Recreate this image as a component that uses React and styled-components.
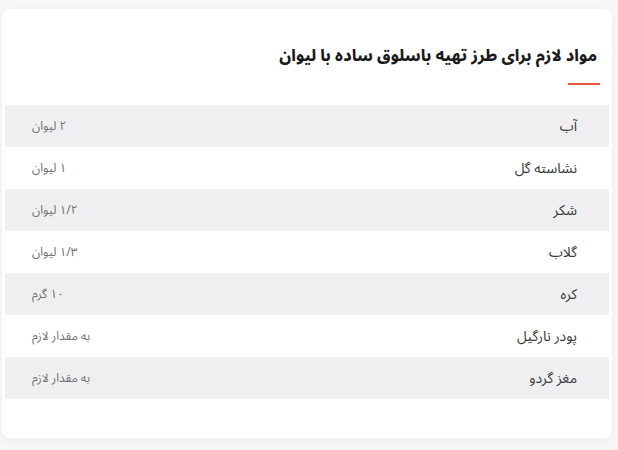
import styled, { createGlobalStyle } from "styled-components";

const GlobalStyle = createGlobalStyle`
  body {
    margin: 0;
    background-color: #f7f7f7;
    font-family: "Noto Sans Arabic", "Noto Sans", "DejaVu Sans", sans-serif;
  }
`;

const Page = styled.div`
  padding: 9px 6px 12px 2px;
`;

const Card = styled.section`
  direction: rtl;
  background-color: #fff;
  border-radius: 8px;
  padding: 0 3px 39px;
  box-shadow: 0 2px 10px rgba(0, 0, 0, 0.05);
`;

const Header = styled.div`
  padding: 33px 12px 20px;
`;

const Title = styled.h2`
  margin: 0;
  font-size: 16px;
  line-height: 28px;
  font-weight: 800;
  color: #1a1a1a;
`;

const Underline = styled.div`
  width: 32px;
  height: 2px;
  margin-top: 13px;
  margin-right: -3px;
  background-color: #e2553d;
`;

const Row = styled.div`
  display: flex;
  align-items: center;
  justify-content: space-between;
  height: 42px;
  padding: 0 32px 0 27px;
  background-color: ${(p) => (p.$striped ? "#efeff1" : "#fff")};
`;

const Name = styled.span`
  font-size: 14px;
  color: #3a3a3a;
`;

const Amount = styled.span`
  font-size: 12px;
  color: #707070;
`;

const ingredients = [
  ["آب", "۲ لیوان"],
  ["نشاسته گل", "۱ لیوان"],
  ["شکر", "۱/۲ لیوان"],
  ["گلاب", "۱/۳ لیوان"],
  ["کره", "۱۰ گرم"],
  ["پودر نارگیل", "به مقدار لازم"],
  ["مغز گردو", "به مقدار لازم"],
];

export default function App() {
  return (
    <Page>
      <GlobalStyle />
      <Card>
        <Header>
          <Title>مواد لازم برای طرز تهیه باسلوق ساده با لیوان</Title>
          <Underline />
        </Header>
        {ingredients.map(([name, amount], i) => (
          <Row key={name} $striped={i % 2 === 0}>
            <Name>{name}</Name>
            <Amount>{amount}</Amount>
          </Row>
        ))}
      </Card>
    </Page>
  );
}
